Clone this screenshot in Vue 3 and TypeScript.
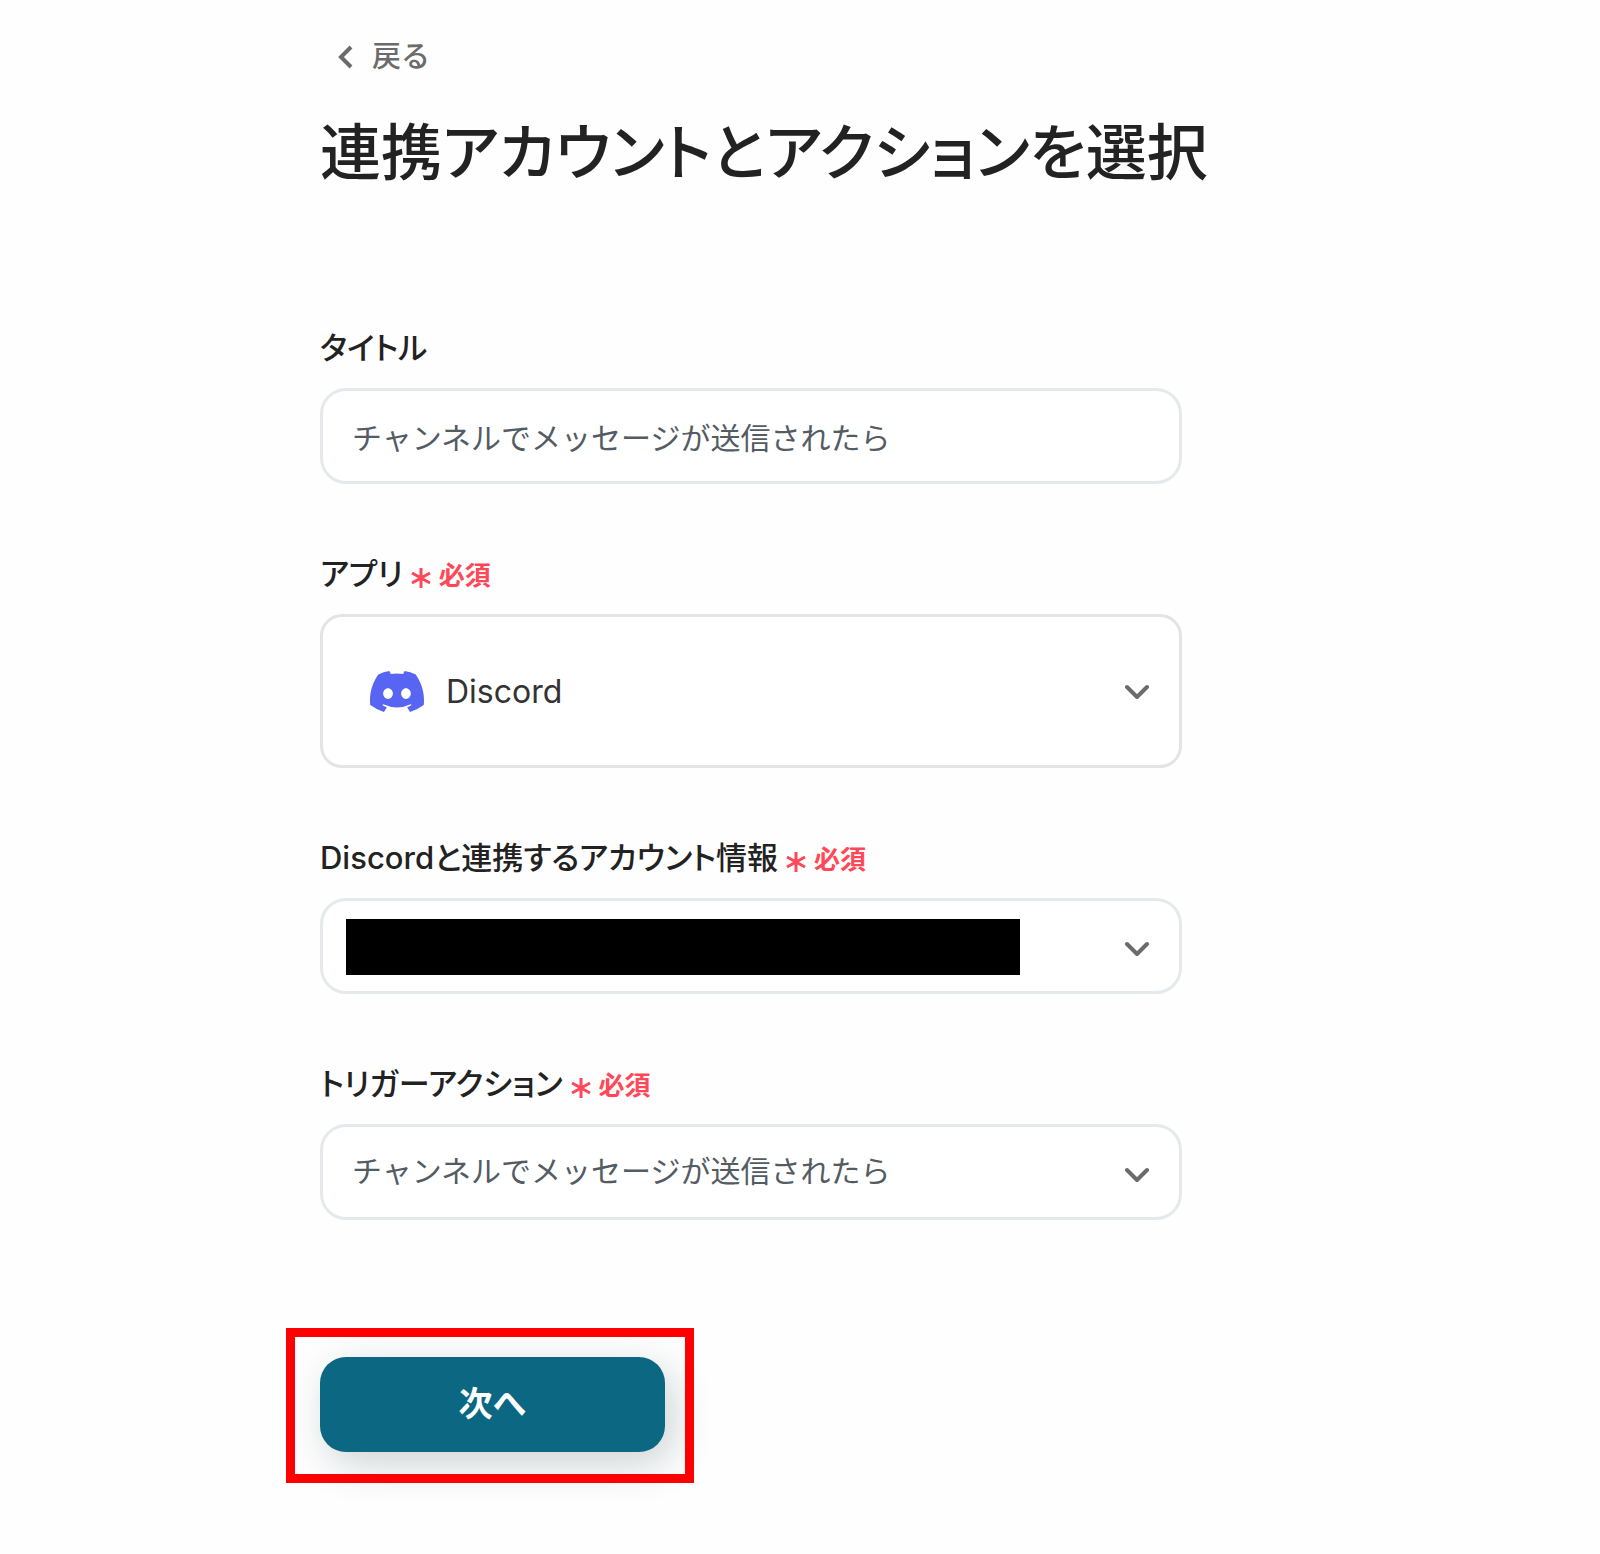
<script setup lang="ts">
import { ref } from 'vue'

interface SelectField {
  id: string
  label: string
  options: string[]
  kind: 'app' | 'account' | 'trigger'
}

const trigger = 'チャンネルでメッセージが送信されたら'
const title = ref<string>(trigger)

const selects: SelectField[] = [
  { id: 'app', label: 'アプリ', options: ['Discord'], kind: 'app' },
  { id: 'account', label: 'Discordと連携するアカウント情報', options: [''], kind: 'account' },
  { id: 'trigger', label: 'トリガーアクション', options: [trigger], kind: 'trigger' },
]
</script>

<template>
  <main class="page">
    <a class="back" href="#">
      <svg class="back-icon" viewBox="0 0 16 24" aria-hidden="true">
        <path d="M13 2 3 12l10 10" />
      </svg>
      戻る
    </a>
    <h1 class="heading">連携アカウントとアクションを選択</h1>

    <form class="form" @submit.prevent>
      <div class="field">
        <label class="label" for="title">タイトル</label>
        <input id="title" v-model="title" class="control" type="text" />
      </div>

      <div v-for="field in selects" :key="field.id" class="field">
        <label class="label" :for="field.id">
          {{ field.label }}
          <span class="required">
            <svg class="asterisk" viewBox="0 0 20 20" aria-hidden="true">
              <path d="M10 0v20M1 5l18 10M19 5 1 15" />
            </svg>
            必須
          </span>
        </label>
        <div class="select-box">
          <select :id="field.id" class="control" :class="field.kind">
            <option v-for="option in field.options" :key="option">{{ option }}</option>
          </select>
          <svg v-if="field.kind === 'app'" class="discord" viewBox="0 0 127.14 96.36" aria-hidden="true">
            <path
              d="M107.7 8.07A105.15 105.15 0 0 0 81.47 0a72.06 72.06 0 0 0-3.36 6.83 97.68 97.68 0 0 0-29.11 0A72.37 72.37 0 0 0 45.64 0a105.89 105.89 0 0 0-26.25 8.09C2.79 32.65-1.71 56.6.54 80.21a105.73 105.73 0 0 0 32.17 16.15 77.7 77.7 0 0 0 6.89-11.11 68.42 68.42 0 0 1-10.85-5.18c.91-.66 1.8-1.34 2.66-2a75.57 75.57 0 0 0 64.32 0c.87.71 1.76 1.39 2.66 2a68.68 68.68 0 0 1-10.87 5.19 77 77 0 0 0 6.89 11.1 105.25 105.25 0 0 0 32.19-16.14c2.64-27.38-4.51-51.11-18.9-72.15ZM42.45 65.69C36.18 65.69 31 60 31 53s5-12.74 11.43-12.74S54 46 53.89 53s-5.05 12.69-11.44 12.69Zm42.24 0C78.41 65.69 73.25 60 73.25 53s5-12.74 11.44-12.74S96.23 46 96.12 53s-5.04 12.69-11.43 12.69Z"
            />
          </svg>
          <span v-if="field.kind === 'account'" class="redaction"></span>
          <svg class="chevron" :class="field.kind" viewBox="0 0 24 16" aria-hidden="true">
            <path d="m2 3 10 10L22 3" />
          </svg>
        </div>
      </div>

      <div class="actions">
        <button class="next" type="submit">次へ</button>
      </div>
    </form>
  </main>
</template>

<style>
body {
  margin: 0;
  background: #fefefe;
}
</style>

<style scoped>
.page {
  box-sizing: border-box;
  min-height: 100vh;
  padding: 37px 40px 72px 20%;
  color: #222;
  font-family: Inter, "Noto Sans CJK JP", sans-serif;
}

.back {
  display: flex;
  align-items: center;
  gap: 18px;
  width: max-content;
  padding-left: 18px;
  color: #6b6b6b;
  font-size: 29px;
  font-weight: 500;
  line-height: 40px;
  text-decoration: none;
}

.back-icon {
  width: 16px;
  height: 24px;
  fill: none;
  stroke: #6b6b6b;
  stroke-width: 4;
}

.heading {
  margin: 32px 0 0;
  font-size: 61px;
  font-weight: 500;
  line-height: 88px;
  font-feature-settings: "palt";
}

.form {
  display: flex;
  flex-direction: column;
  gap: 70px;
  max-width: 862px;
  margin-top: 131px;
}

.field {
  display: flex;
  flex-direction: column;
  gap: 20px;
}

.label {
  display: flex;
  align-items: center;
  gap: 8px;
  font-size: 31px;
  font-weight: 500;
  line-height: 40px;
  font-feature-settings: "palt";
}

.required {
  display: flex;
  align-items: center;
  gap: 8px;
  padding-top: 4px;
  color: #ff4757;
  font-size: 26px;
  font-weight: 700;
  line-height: 36px;
}

.asterisk {
  width: 20px;
  height: 20px;
  margin-top: 3px;
  fill: none;
  stroke: #ff4757;
  stroke-width: 3;
}

.control {
  box-sizing: border-box;
  display: block;
  width: 100%;
  height: 96px;
  margin: 0;
  padding: 0 29px;
  border: 3px solid #e6e9ec;
  border-radius: 26px;
  outline: none;
  background: #fff;
  color: #535b63;
  font-family: inherit;
  font-size: 30px;
  appearance: none;
}

.control.app {
  height: 154px;
  padding-left: 123px;
  border-color: #e4e4e4;
  border-radius: 22px;
  color: #333;
  font-size: 32px;
}

.control.trigger {
  padding-bottom: 2px;
}

.select-box {
  position: relative;
}

.discord {
  position: absolute;
  top: calc(50% - 20px);
  left: 50px;
  width: 54px;
  height: 41px;
  fill: #5865f2;
}

.redaction {
  position: absolute;
  top: 21px;
  bottom: 19px;
  left: 26px;
  width: 674px;
  background: #000;
}

.chevron {
  position: absolute;
  top: calc(50% - 5px);
  right: 33px;
  width: 24px;
  height: 16px;
  fill: none;
  stroke: #6b6b6b;
  stroke-width: 4;
  stroke-linecap: round;
  stroke-linejoin: round;
  pointer-events: none;
}

.chevron.app {
  top: calc(50% - 7px);
}

.actions {
  position: relative;
  width: 40%;
  margin-top: 67px;
}

.actions::after {
  content: "";
  position: absolute;
  inset: -29px -29px -31px -34px;
  border: 9px solid #f00;
  pointer-events: none;
}

.next {
  display: block;
  width: 100%;
  height: 95px;
  padding: 0 0 6px;
  border: 0;
  border-radius: 26px;
  background: #0b6782;
  box-shadow: 8px 12px 40px rgb(10 40 50 / 20%);
  color: #fff;
  font-family: inherit;
  font-size: 34px;
  font-weight: 700;
}
</style>
